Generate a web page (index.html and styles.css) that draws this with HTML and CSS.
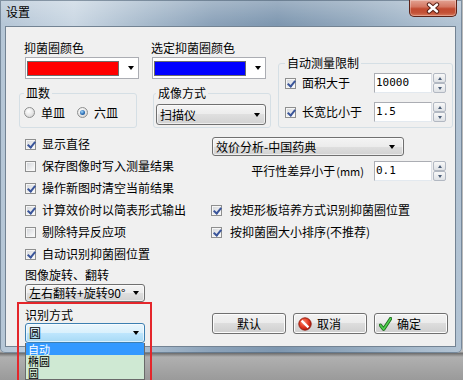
FILE: index.html
```html
<!DOCTYPE html>
<html lang="zh-CN">
<head>
<meta charset="utf-8">
<title>设置</title>
<link rel="stylesheet" href="styles.css">
</head>
<body>
<div class="window">
  <div class="titlebar">
    <span class="title">设置</span>
    <div class="close">
      <svg width="16" height="12" viewBox="0 0 16 12"><path d="M4 2.5 L12 9.5 M12 2.5 L4 9.5" stroke="#5a2016" stroke-width="4.4" stroke-linecap="round"/><path d="M4 2.5 L12 9.5 M12 2.5 L4 9.5" stroke="#fff" stroke-width="2.4" stroke-linecap="round"/></svg>
    </div>
  </div>
  <div class="client">
    <div class="top">
      <div class="col col-a">
        <div class="lbl pad5">抑菌圈颜色</div>
        <div class="colorcombo"><span class="swatch red"></span><span class="arrow"></span></div>
        <fieldset class="group g-dish">
          <legend>皿数</legend>
          <div class="radios">
            <span class="opt"><span class="radio"></span>单皿</span>
            <span class="opt opt2"><span class="radio on"></span>六皿</span>
          </div>
        </fieldset>
      </div>
      <div class="col col-b">
        <div class="lbl">选定抑菌圈颜色</div>
        <div class="colorcombo"><span class="swatch blue"></span><span class="arrow"></span></div>
        <fieldset class="group g-img">
          <legend>成像方式</legend>
          <div class="combo c-scan"><span>扫描仪</span><span class="arrow"></span></div>
        </fieldset>
      </div>
      <fieldset class="group g-auto">
        <legend>自动测量限制</legend>
        <div class="limrow">
          <span class="check on"></span><span>面积大于</span>
          <div class="spinbox"><div class="edit">10000</div><div class="spin"><span class="up"></span><span class="dn"></span></div></div>
        </div>
        <div class="limrow lim2">
          <span class="check on"></span><span>长宽比小于</span>
          <div class="spinbox"><div class="edit">1.5</div><div class="spin"><span class="up"></span><span class="dn"></span></div></div>
        </div>
      </fieldset>
    </div>

    <div class="mid">
      <div class="checks">
        <div class="row"><span class="check on"></span>显示直径</div>
        <div class="row"><span class="check"></span>保存图像时写入测量结果</div>
        <div class="row"><span class="check on"></span>操作新图时清空当前结果</div>
        <div class="row"><span class="check on"></span>计算效价时以简表形式输出</div>
        <div class="row"><span class="check"></span>剔除特异反应项</div>
        <div class="row"><span class="check on"></span>自动识别抑菌圈位置</div>
      </div>
      <div class="right">
        <div class="combo c-method"><span>效价分析-中国药典</span><span class="arrow"></span></div>
        <div class="param">
          <span class="plabel">平行性差异小于<span class="unit">(mm)</span></span>
          <div class="spinbox"><div class="edit">0.1</div><div class="spin"><span class="up"></span><span class="dn"></span></div></div>
        </div>
        <div class="checks2">
          <div class="row"><span class="check on"></span>按矩形板培养方式识别抑菌圈位置</div>
          <div class="row"><span class="check on"></span>按抑菌圈大小排序(不推荐)</div>
        </div>
      </div>
    </div>

    <div class="bottom">
      <div class="bcol">
        <div class="lbl">图像旋转、翻转</div>
        <div class="combo c-rot"><span>左右翻转+旋转90°</span><span class="arrow"></span></div>
        <div class="lbl l-mode">识别方式</div>
        <div class="dd">
          <div class="combo c-mode focus"><span>圆</span><span class="arrow"></span></div>
          <ul class="list">
            <li class="sel">自动</li>
            <li>椭圆</li>
            <li>圆</li>
          </ul>
        </div>
      </div>
      <div class="buttons">
        <button class="btn plain">默认</button>
        <button class="btn">
          <svg width="14" height="14" viewBox="0 0 14 14"><defs><radialGradient id="rg" cx="40%" cy="35%" r="70%"><stop offset="0" stop-color="#ff8a70"/><stop offset="0.6" stop-color="#e0341c"/><stop offset="1" stop-color="#a5190c"/></radialGradient></defs><circle cx="7" cy="7" r="6.2" fill="url(#rg)" stroke="#8c1a0e" stroke-width="0.9"/><path d="M3.6 3.6 L10.4 10.4" stroke="#fff" stroke-width="2.4"/></svg>
          <span>取消</span>
        </button>
        <button class="btn">
          <svg width="13" height="14" viewBox="0 0 13 14"><path d="M1.5 8.2 L4.6 12.2 L11.6 1.6" fill="none" stroke="#1f6e1f" stroke-width="3.4" stroke-linecap="round" stroke-linejoin="round"/><path d="M1.5 8.2 L4.6 12.2 L11.6 1.6" fill="none" stroke="#4fd04f" stroke-width="1.6" stroke-linecap="round" stroke-linejoin="round"/></svg>
          <span>确定</span>
        </button>
      </div>
    </div>
  </div>
</div>
<div class="highlight"></div>
</body>
</html>
```

FILE: styles.css
```css
* { box-sizing: border-box; }
html, body { margin: 0; padding: 0; }
body {
  width: 463px;
  height: 380px;
  overflow: hidden;
  position: relative;
  font: 12px/14px "Noto Sans CJK SC", "Noto Sans", sans-serif;
  color: #000;
  background: linear-gradient(180deg, #b9b9b9 0, #b9b9b9 352px, #6a6a6a 353px, #b0b0b0 357px, #9a9a9a 380px);
}

.window {
  width: 462px;
  height: 353px;
  padding: 0 6px 6px 5px;
  display: flex;
  flex-direction: column;
  border-radius: 0 0 5px 5px;
  background:
    linear-gradient(180deg, rgba(255,255,255,.25) 0, rgba(255,255,255,0) 24px),
    linear-gradient(90deg, #b5c6d6 0%, #cad7e3 16%, #a7bacc 32%, #8ba2b9 46%, #7e97b0 60%, #92a8bd 76%, #a8bbcd 90%, #b3c4d4 100%);
  box-shadow: inset 0 0 0 1px rgba(70, 90, 110, .55);
}

.titlebar {
  height: 26px;
  margin: 0 -6px 0 -5px;
  padding-left: 6px;
  display: flex;
  justify-content: space-between;
  align-items: flex-start;
}
.title { padding-top: 5px; line-height: 14px; }
.close {
  width: 48px;
  height: 17px;
  margin-right: 5px;
  border: 1px solid #5d2217;
  border-top: none;
  border-radius: 0 0 5px 5px;
  background: linear-gradient(180deg, #e3a393 0%, #d47762 42%, #c24a30 55%, #c35237 80%, #d97a5e 100%);
  box-shadow: inset 0 0 0 1px rgba(255,255,255,.3);
  display: flex;
  align-items: center;
  justify-content: center;
}

.client {
  flex: 1;
  background: #f0f0f0;
  border: 1px solid #738393;
  display: flex;
  flex-direction: column;
}

.lbl { height: 14px; line-height: 14px; white-space: nowrap; }
.pad5 { padding-left: 5px; }

/* top section */
.top {
  display: flex;
  align-items: flex-start;
  margin-top: 14px;
  padding-left: 13px;
}
.col-a { width: 127px; }
.col-b { width: 120px; margin-left: 5px; }

.colorcombo {
  width: 114px;
  height: 22px;
  margin-top: 2px;
  border: 1px solid #abadb3;
  background: #fff;
  display: flex;
  align-items: center;
}
.col-a .colorcombo { margin-left: 6px; }
.col-b .colorcombo { margin-left: 1px; }
.swatch {
  width: 92px;
  height: 15px;
  margin-left: 1px;
  border: 1px solid #6c6c6c;
}
.swatch.red { background: #ff0000; }
.swatch.blue { background: #0000ff; }
.colorcombo .arrow { margin-left: auto; margin-right: 4px; }

.arrow {
  width: 0;
  height: 0;
  border-left: 3.5px solid transparent;
  border-right: 3.5px solid transparent;
  border-top: 4px solid #000;
  flex: none;
}

.group {
  margin: 0;
  padding: 0 4px;
  border: 1px solid #d5dfe5;
  border-radius: 3px;
  min-width: 0;
}
.group legend {
  padding: 0 2px;
  line-height: 14px;
  height: 14px;
  white-space: nowrap;
}

.g-dish { width: 118px; height: 42px; margin-top: 7px; }
.radios { display: flex; align-items: center; margin-top: 7px; height: 11px; }
.opt { display: flex; align-items: center; gap: 6px; white-space: nowrap; }
.opt2 { margin-left: 12px; }

.radio {
  width: 11px;
  height: 11px;
  flex: none;
  border-radius: 50%;
  border: 1px solid #8e8f8f;
  background: radial-gradient(circle at 40% 35%, #ffffff 0, #e8e8e8 50%, #c8c8c8 100%);
  position: relative;
}
.radio.on::after {
  content: "";
  position: absolute;
  left: 2px;
  top: 2px;
  width: 5px;
  height: 5px;
  border-radius: 50%;
  background: radial-gradient(circle at 40% 35%, #a6d8fb 0, #2a6fb7 55%, #153c6e 100%);
}

.g-img { width: 118px; height: 42px; margin-top: 7px; margin-left: 2px; padding: 0 4px 0 2px; }

.combo {
  display: flex;
  align-items: center;
  border: 1px solid #707070;
  border-radius: 3px;
  padding: 0 5px 0 3px;
  white-space: nowrap;
  background: linear-gradient(180deg, #f4f4f4 0%, #ececec 50%, #dfdfdf 50%, #d2d2d2 100%);
  box-shadow: inset 0 0 0 1px rgba(255,255,255,.6);
}
.combo .arrow { margin-left: auto; }
.combo.focus {
  border-color: #3c7fb1;
  background: linear-gradient(180deg, #eaf6fd 0%, #d9f0fc 50%, #bee6fd 50%, #a7d9f5 100%);
}
.c-scan { width: 110px; height: 21px; margin-top: 4px; }

.g-auto { width: 175px; height: 72px; margin-top: 15px; margin-left: 7px; padding: 0 6px 0 6px; }
.limrow { display: flex; align-items: center; height: 20px; margin-top: 3px; white-space: nowrap; }
.limrow.lim2 { margin-top: 9px; }
.limrow .check { margin-right: 6px; }

.check {
  width: 11px;
  height: 11px;
  flex: none;
  border: 1px solid #8e8f8f;
  background: linear-gradient(135deg, #d0d3d8 0%, #eeeff0 65%, #ffffff 100%);
  box-shadow: inset 0 0 0 1px #f6f6f6;
  position: relative;
}
.check.on::after {
  content: "";
  position: absolute;
  left: 3px;
  top: 0;
  width: 3px;
  height: 6px;
  border-right: 2px solid #3a559a;
  border-bottom: 2px solid #3a559a;
  transform: rotate(40deg);
}

.spinbox { margin-left: auto; display: flex; gap: 1px; height: 20px; }
.edit {
  width: 58px;
  height: 100%;
  border: 1px solid #abadb3;
  border-right-color: #dbdfe6;
  border-bottom-color: #e3e9ef;
  background: #fff;
  font: 11px/18px "DejaVu Sans Mono", monospace;
  padding-left: 1px;
}
.spin { width: 13px; display: flex; flex-direction: column; }
.spin span {
  flex: 1;
  border: 1px solid #b2b8c2;
  border-radius: 2px;
  background: linear-gradient(180deg, #f8f8f8, #dfe2e6);
  display: flex;
  align-items: center;
  justify-content: center;
}
.spin .up::after, .spin .dn::after {
  content: "";
  width: 0;
  height: 0;
  border-left: 2.5px solid transparent;
  border-right: 2.5px solid transparent;
}
.spin .up::after { border-bottom: 3px solid #4c5e78; }
.spin .dn::after { border-top: 3px solid #4c5e78; }

/* middle section */
.mid { display: flex; margin-top: 5px; padding-left: 19px; }
.checks { width: 186px; }
.row { height: 22px; display: flex; align-items: center; white-space: nowrap; }
.checks .check { margin-right: 6px; }
.right { width: 235px; }
.c-method { width: 192px; height: 19px; margin-top: 4px; margin-left: 1px; padding-right: 8px; }
.param { display: flex; align-items: center; justify-content: flex-end; height: 20px; margin-top: 5px; white-space: nowrap; }
.param .spinbox { margin-left: 0; }
.plabel { margin-right: 10px; }
.unit { font-size: 11px; margin-left: 1px; }
.checks2 { margin-top: 18px; }
.checks2 .check { margin-right: 8px; }

/* bottom section */
.bottom { display: flex; align-items: flex-end; margin-top: 3px; padding-left: 19px; }
.bcol { width: 120px; }
.c-rot { height: 18px; margin-top: 2px; }
.l-mode { margin-top: 6px; }
.dd { position: relative; margin-top: 1px; }
.c-mode { height: 20px; }
.list {
  position: absolute;
  left: 0;
  top: 100%;
  width: 100%;
  margin: 0;
  padding: 0;
  list-style: none;
  background: #cfe9d3;
  border: 1px solid #6a6a6a;
  border-top: none;
  z-index: 3;
}
.list li { height: 12px; line-height: 12px; font-size: 11px; padding-left: 2px; white-space: nowrap; }
.list li.sel { background: #3399ff; color: #fff; }

.buttons { margin-left: auto; margin-right: 7px; margin-bottom: 9px; display: flex; gap: 7px; }
.btn {
  width: 74px;
  height: 21px;
  padding: 0 0 0 4px;
  border: 1px solid #707070;
  border-radius: 3px;
  background: linear-gradient(180deg, #f2f2f2 0%, #ebebeb 50%, #dddddd 50%, #cfcfcf 100%);
  box-shadow: inset 0 0 0 1px #fcfcfc;
  font: inherit;
  color: #000;
  display: flex;
  align-items: center;
  gap: 5px;
}
.btn.plain { justify-content: center; padding: 0; }
.btn svg { flex: none; }

.highlight {
  position: absolute;
  left: 17px;
  top: 302px;
  width: 135px;
  height: 90px;
  border: 2px solid #e4262b;
  z-index: 5;
  pointer-events: none;
}
```
